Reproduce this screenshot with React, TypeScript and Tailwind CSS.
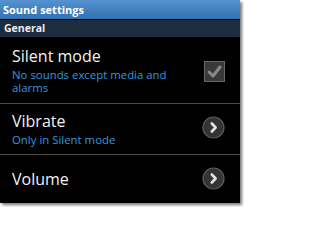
import { ReactNode } from 'react';

const font = { fontFamily: '"Open Sans", "Noto Sans", "DejaVu Sans", sans-serif' };

function CheckBox() {
  return (
    <svg width="21" height="21" viewBox="0 0 21 21">
      <rect x="0.5" y="0.5" width="20" height="20" fill="#393939" stroke="#656565" />
      <path d="M5 11 L9 15 L16 6" fill="none" stroke="#8a8a8a" strokeWidth="3" strokeLinejoin="round" strokeLinecap="round" />
    </svg>
  );
}

function ArrowButton() {
  return (
    <svg width="23" height="23" viewBox="0 0 23 23">
      <circle cx="11.5" cy="11.5" r="10.5" fill="#343434" stroke="#5c5c5c" strokeWidth="1.2" />
      <path d="M9.8 7.5 L13.6 11.5 L9.8 15.5" fill="none" stroke="#e2e2e2" strokeWidth="2.6" strokeLinecap="round" strokeLinejoin="round" />
    </svg>
  );
}

function Row({ title, sub, icon, pad, iconTop }: { title: string; sub?: ReactNode; icon: ReactNode; pad: string; iconTop: string }) {
  return (
    <div className={`flex shrink-0 items-start justify-between border-b border-[#4a4a4a] pl-[12px] pr-[15px] ${pad}`}>
      <div className="flex flex-col">
        <span className="text-[16px] leading-[20px] text-[#f2f2f2]">{title}</span>
        {sub && <span className="mt-[2px] text-[11.4px] leading-[13px] text-[#3399dd]">{sub}</span>}
      </div>
      <div className={iconTop}>{icon}</div>
    </div>
  );
}

export default function App() {
  return (
    <div className="w-[244px] h-[207px] bg-white overflow-hidden" style={font}>
      <div className="w-[240px] h-[203px] bg-black flex flex-col overflow-hidden shadow-[2px_2px_3px_rgba(0,0,0,0.55)]">
        <div className="h-[19px] shrink-0 bg-gradient-to-b from-[#5592cf] to-[#3270b0] pl-[3px] text-[11px] leading-[19px] font-bold text-white">
          Sound settings
        </div>
        <div className="h-[1px] shrink-0 bg-black" />
        <div className="h-[17px] shrink-0 bg-[#1e2d3d] pl-[4px] text-[10.5px] leading-[17px] font-bold text-[#ececec]">
          General
        </div>
        <div className="h-[1px] shrink-0 bg-black" />
        <Row
          title="Silent mode"
          sub={<>No sounds except media and<br />alarms</>}
          icon={<CheckBox />}
          pad="pt-[8px] pb-[9px]"
          iconTop="mt-[15px]"
        />
        <Row
          title="Vibrate"
          sub="Only in Silent mode"
          icon={<ArrowButton />}
          pad="pt-[7px] pb-[8px]"
          iconTop="mt-[5px]"
        />
        <Row title="Volume" icon={<ArrowButton />} pad="pt-[14px] pb-[14px]" iconTop="-mt-[2px]" />
      </div>
    </div>
  );
}
